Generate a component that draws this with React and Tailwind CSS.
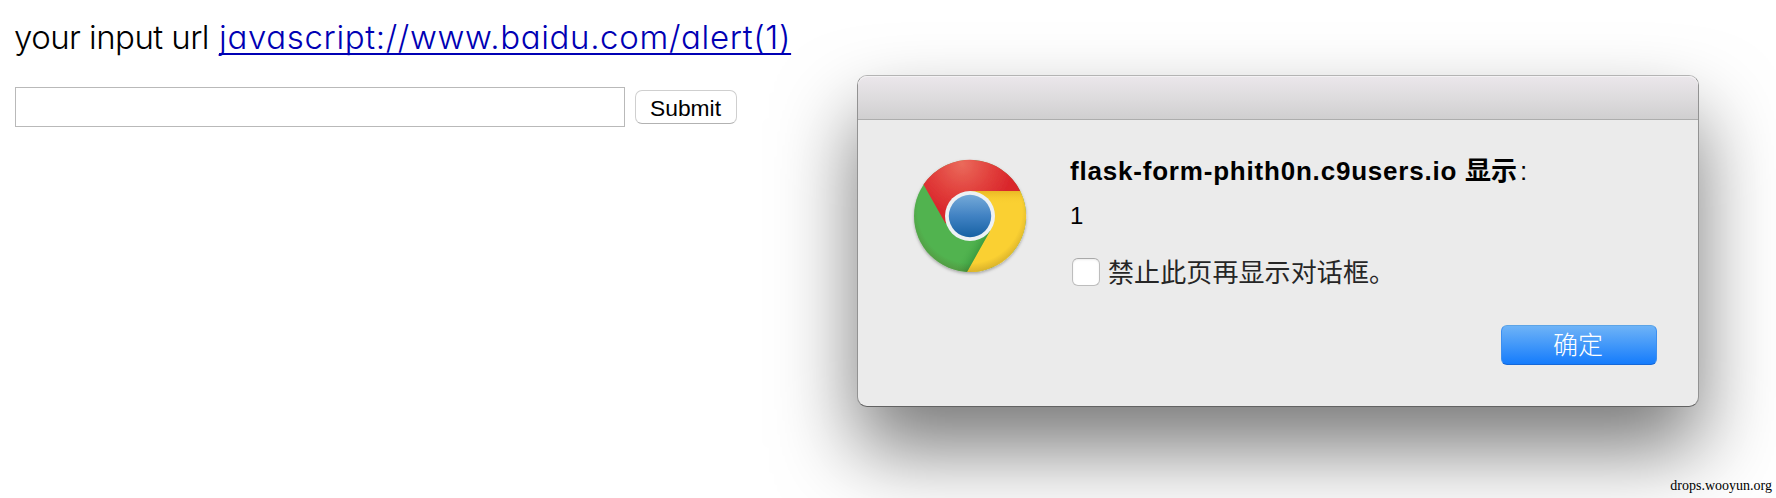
function ChromeLogo() {
  return (
    <svg
      className="h-[120px] w-[120px] shrink-0"
      viewBox="-60 -60 120 120"
      fill="none"
      aria-hidden="true"
    >
      <defs>
        <radialGradient id="red" cx="-8" cy="-52" r="52" gradientUnits="userSpaceOnUse">
          <stop offset="0" stopColor="#ea6a5b" />
          <stop offset="0.6" stopColor="#e13e3b" />
          <stop offset="1" stopColor="#d9252b" />
        </radialGradient>
        <linearGradient id="blue" x1="0" y1="-21" x2="0" y2="21" gradientUnits="userSpaceOnUse">
          <stop offset="0" stopColor="#74a9d8" />
          <stop offset="0.5" stopColor="#4182c3" />
          <stop offset="1" stopColor="#1762a4" />
        </linearGradient>
        <radialGradient id="rim" cx="0" cy="-5" r="62" gradientUnits="userSpaceOnUse">
          <stop offset="0.84" stopColor="#5a3a10" stopOpacity="0" />
          <stop offset="1" stopColor="#5a3a10" stopOpacity="0.22" />
        </radialGradient>
        <linearGradient id="yellowShade" x1="0" y1="-25" x2="0" y2="-12" gradientUnits="userSpaceOnUse">
          <stop offset="0" stopColor="#d99e18" stopOpacity="0.5" />
          <stop offset="1" stopColor="#fbd031" stopOpacity="0" />
        </linearGradient>
        <linearGradient id="greenShade" x1="8" y1="38" x2="-4" y2="31" gradientUnits="userSpaceOnUse">
          <stop offset="0" stopColor="#1c7a2c" stopOpacity="0.45" />
          <stop offset="1" stopColor="#4fb44c" stopOpacity="0" />
        </linearGradient>
        <filter id="drop" x="-20%" y="-20%" width="140%" height="140%">
          <feDropShadow dx="0" dy="1.5" stdDeviation="1.5" floodOpacity="0.3" />
        </filter>
      </defs>
      <g filter="url(#drop)">
        <circle r="56" fill="#51b34f" />
        <path d="M-46.500 -31.500A56 56 0 0 1 50.200 -25L0 -25L-24.500 7.500Z" fill="url(#red)" />
        <path d="M0 -25H50.200A56 56 0 0 1 -3 56L20 15Z" fill="#fad033" />
      </g>
      <path d="M0 -25H50.200L54 -12H18Z" fill="url(#yellowShade)" />
      <path d="M20 15L-3 56L-15 53L-10 22Z" fill="url(#greenShade)" />
      <circle r="56" fill="url(#rim)" />
      <circle r="25" fill="#edf1f4" />
      <circle r="21.200" fill="url(#blue)" />
    </svg>
  );
}

function AlertDialog() {
  return (
    <section
      role="dialog"
      className="absolute top-[75px] left-[857px] flex h-[332px] w-[842px] flex-col overflow-visible rounded-[10px] border border-t-[#b4b4b4] border-r-[#929292] border-b-[#626262] border-l-[#929292] bg-[#ebebeb] bg-clip-padding shadow-[0_42px_80px_rgba(0,0,0,0.53)]"
    >
      <header className="h-11 shrink-0 rounded-t-[9px] border-b border-[#adadad] bg-[linear-gradient(to_bottom,#ebe7eb,#dedcde_50%,#d0cfd0)] shadow-[inset_0_1px_0_#f4f2f4]" />
      <div className="flex flex-1 flex-col pr-[41px] pl-[52px]">
        <div className="flex pt-[36px]">
          <ChromeLogo />
          <div className="-mt-px flex flex-col pl-[40px] font-['Liberation_Sans','Noto_Sans_CJK_SC',sans-serif] text-black">
            <h1 className="flex h-[32px] items-center whitespace-pre text-[26px] leading-8 font-bold">
              <span className="w-[395px] tracking-[0.8px]">flask-form-phith0n.c9users.io</span>
              <span className="text-[26px]">显示</span>
              <span className="pl-[3px] font-normal">:</span>
            </h1>
            <p className="mt-[13px] h-8 text-[24px] leading-8">1</p>
            <label className="mt-[26px] flex h-[28px] items-center gap-[8px] pl-[2px]">
              <span className="size-[28px] rounded-[6px] border border-[#bdbdbd] border-t-[#a9a9a9] bg-white shadow-[inset_0_1px_2px_rgba(0,0,0,0.08)]" />
              <span className="pt-[2px] text-[26px] leading-[28px] tracking-[0.1px] text-[#262626]">禁止此页再显示对话框。</span>
            </label>
          </div>
        </div>
        <button className="mt-[39px] flex h-10 w-[156px] shrink-0 items-center justify-center self-end rounded-[6px] border border-t-[#5ca4e6] border-r-[#3c8ff0] border-b-[#1568d8] border-l-[#3c8ff0] bg-[linear-gradient(to_bottom,#6eb3f7,#157cfc)] pr-[2px] pb-[4px] font-['Noto_Sans_CJK_SC',sans-serif] text-[25px] leading-8 font-light text-white">
          确定
        </button>
      </div>
    </section>
  );
}

export default function App() {
  return (
    <main className="relative flex h-[498px] w-[1776px] flex-col overflow-hidden bg-white">
      <p className="flex h-[48px] items-center pt-[25px] pl-[14px] font-['Inter',sans-serif] text-[33px] leading-[40px] font-light whitespace-pre text-black [font-feature-settings:'cv11']">
        <span className="w-[205px] tracking-[-0.55px]">your input url </span>
        <a className="tracking-[0.65px] text-[#0000b4] underline decoration-2 underline-offset-[4px] [text-decoration-skip-ink:none]">
          javascript://www.baidu.com/alert(1)
        </a>
      </p>
      <form className="mt-[39px] flex items-center gap-[10px] pl-[15px]">
        <input type="text" className="h-10 w-[610px] border border-[#b9b9b9] bg-white" />
        <button
          type="button"
          className="h-[34px] w-[102px] rounded-[7px] border border-[#cfcfcf] border-b-[#b2b2b2] bg-white pt-[2px] pr-[1px] font-['Liberation_Sans',sans-serif] text-[22.800px] leading-[30px] text-black"
        >
          Submit
        </button>
      </form>
      <AlertDialog />
      <footer className="mt-auto flex justify-end pr-[4px] pb-[2px] font-['Liberation_Serif',serif] text-[14px] leading-5 text-black">
        <span className="relative z-10">drops.wooyun.org</span>
      </footer>
    </main>
  );
}
